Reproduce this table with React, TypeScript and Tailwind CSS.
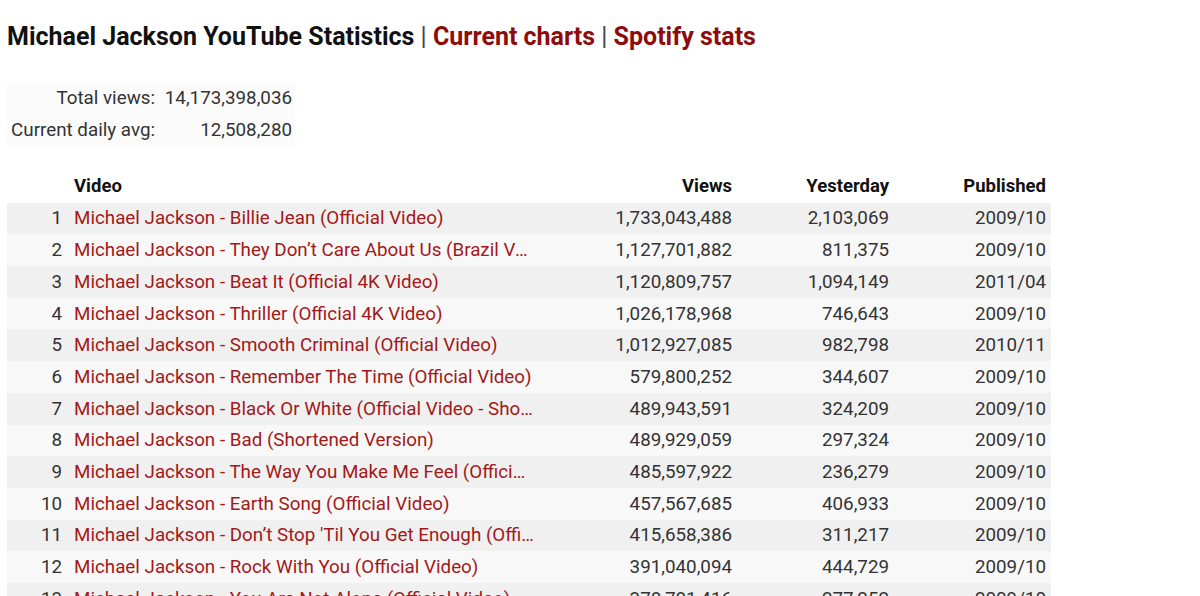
const rows: [number, string, string, string, string][] = [
  [1, "Michael Jackson - Billie Jean (Official Video)", "1,733,043,488", "2,103,069", "2009/10"],
  [2, "Michael Jackson - They Don’t Care About Us (Brazil Version) (Official Video)", "1,127,701,882", "811,375", "2009/10"],
  [3, "Michael Jackson - Beat It (Official 4K Video)", "1,120,809,757", "1,094,149", "2011/04"],
  [4, "Michael Jackson - Thriller (Official 4K Video)", "1,026,178,968", "746,643", "2009/10"],
  [5, "Michael Jackson - Smooth Criminal (Official Video)", "1,012,927,085", "982,798", "2010/11"],
  [6, "Michael Jackson - Remember The Time (Official Video)", "579,800,252", "344,607", "2009/10"],
  [7, "Michael Jackson - Black Or White (Official Video - Shortened Version)", "489,943,591", "324,209", "2009/10"],
  [8, "Michael Jackson - Bad (Shortened Version)", "489,929,059", "297,324", "2009/10"],
  [9, "Michael Jackson - The Way You Make Me Feel (Official Video)", "485,597,922", "236,279", "2009/10"],
  [10, "Michael Jackson - Earth Song (Official Video)", "457,567,685", "406,933", "2009/10"],
  [11, "Michael Jackson - Don’t Stop 'Til You Get Enough (Official Video)", "415,658,386", "311,217", "2009/10"],
  [12, "Michael Jackson - Rock With You (Official Video)", "391,040,094", "444,729", "2009/10"],
  [13, "Michael Jackson - You Are Not Alone (Official Video)", "378,781,416", "277,252", "2009/10"],
];

const cols = "grid grid-cols-[61px_477px_193px_157px_156px] items-center h-[31.7px]";

export default function App() {
  return (
    <div className="min-h-screen bg-white text-[#333] font-['Roboto','Liberation_Sans',sans-serif]">
      <div className="pl-[7px] pt-[20px]">
        <h1 className="text-[25px] font-bold leading-[34px] text-[#111]">
          Michael Jackson YouTube Statistics <span className="font-normal text-[#444]">|</span>{" "}
          <a className="text-[#8e0b0b]">Current charts</a> <span className="font-normal text-[#444]">|</span>{" "}
          <a className="text-[#8e0b0b]">Spotify stats</a>
        </h1>

        <div className="mt-[28px] w-[288px] bg-[#fbfbfb] text-[18.8px]">
          <div className="grid grid-cols-[154px_134px] items-center h-[32px]">
            <span className="text-right pr-[6px] text-[#333]">Total views:</span>
            <span className="text-right pr-[3px]">14,173,398,036</span>
          </div>
          <div className="grid grid-cols-[154px_134px] items-center h-[32px]">
            <span className="text-right pr-[6px] text-[#333]">Current daily avg:</span>
            <span className="text-right pr-[3px]">12,508,280</span>
          </div>
        </div>

        <div className="mt-[25px] w-[1044px]">
          <div className={`${cols} text-[18.5px] font-bold text-[#111]`}>
            <span />
            <span className="pl-[6px]">Video</span>
            <span className="text-right pr-[6px]">Views</span>
            <span className="text-right pr-[6px]">Yesterday</span>
            <span className="text-right pr-[5px]">Published</span>
          </div>
          {rows.map(([rank, title, views, yesterday, published]) => (
            <div key={rank} className={`${cols} text-[18.8px] ${rank % 2 === 1 ? "bg-[#f0f0f0]" : "bg-[#f8f8f8]"}`}>
              <span className="text-right pr-[6px]">{rank}</span>
              <a className="pl-[6px] pr-[10px] truncate text-[#a31818]">{title}</a>
              <span className="text-right pr-[6px]">{views}</span>
              <span className="text-right pr-[6px]">{yesterday}</span>
              <span className="text-right pr-[5px]">{published}</span>
            </div>
          ))}
        </div>
      </div>
    </div>
  );
}
